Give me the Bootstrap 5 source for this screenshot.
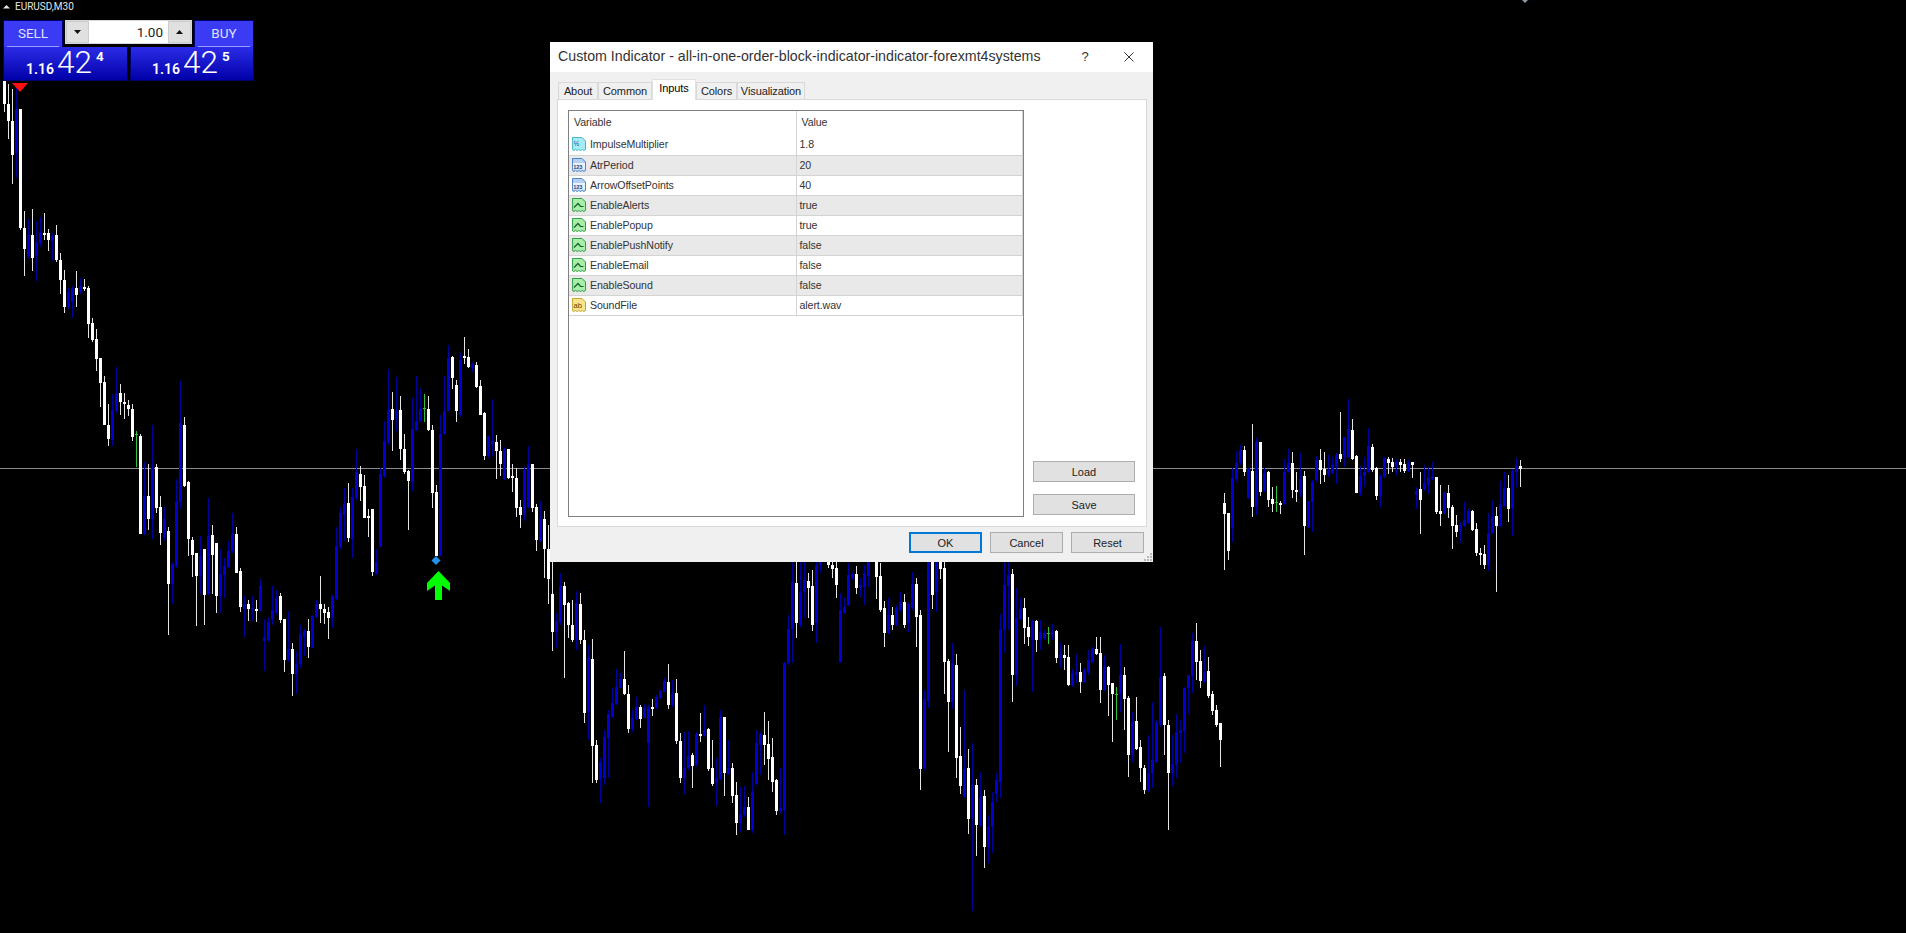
<!DOCTYPE html>
<html lang="en">
<head>
<meta charset="UTF-8">
<meta name="viewport" content="width=device-width, initial-scale=1.0">
<title>EURUSD,M30</title>
<link href="https://cdn.jsdelivr.net/npm/bootstrap@5.3.3/dist/css/bootstrap.min.css" rel="stylesheet">
<style>
    body {
        background: #000;
        margin: 0;
        overflow: hidden;
        font-family: "Liberation Sans", Arial, sans-serif;
    }

    .chart-area {
        width: 1906px;
        height: 933px;
        background: #000;
    }

    .chart-svg {
        left: 0;
        top: 0;
    }

    /* symbol label + one click trading panel */
    .sym-label {
        left: 15px;
        top: 0;
        color: #e6e6e6;
        font: 400 10px/14px Roboto, sans-serif;
    }

    .trade-panel {
        left: 3px;
        top: 20px;
        width: 251px;
        font-family: Roboto, sans-serif;
        color: #fff;
    }

    .side-btn {
        width: 60px;
        height: 27px;
        padding: 2px 3px 0;
        background: #3b3bf6;
        color: #dfe2ff;
        font-size: 13.5px;
        font-weight: 400;
        line-height: 20px;
        text-align: center;
        border: 1px solid #00006e;
        border-bottom: 0;
    }

    .side-btn span {
        display: block;
        height: 24px;
        border-bottom: 1px solid #9a9cff;
    }

    .lot-spin {
        width: 127px;
        height: 24px;
        background: #fff;
        color: #222;
        font-size: 13.5px;
        font-weight: 400;
        line-height: 22px;
        border: 1px solid #d8d8d8;
    }

    .lot-arrow {
        width: 23px;
        background: #e0e0e0;
        border: 1px solid #cccccc;
    }

    .lot-val {
        padding-right: 5px;
    }

    .quote-box {
        height: 34px;
        background: linear-gradient(#2c2ce8, #0000a8);
        border: 1px solid #00006e;
        border-top: 0;
        line-height: 1;
    }

    .quote-a { width: 125px; padding-left: 22px; }
    .quote-b { width: 124px; padding-left: 21px; }

    .q-head { font-size: 14px; font-weight: 600; margin-top: 15px; }
    .q-big { font-size: 31.5px; font-weight: 300; margin: 0 0 0 3px; }
    .q-tail { font-size: 13.5px; font-weight: 700; margin: 3px 0 0 4px; }

    /* dialog window */
    .dlg-window {
        left: 550px;
        top: 42px;
        width: 603px;
        height: 520px;
        background: #f0f0f0;
        color: #222;
        font-size: 11px;
        z-index: 5;
    }

    .dlg-title {
        height: 30px;
        background: #fff;
        padding-left: 8px;
        font-size: 14.2px;
        color: #333;
    }

    .dlg-help {
        width: 14px;
        margin-right: 32px;
        font-size: 13px;
        text-align: center;
    }

    .dlg-close {
        margin-right: 19px;
    }

    .tab-strip {
        margin: 7px 0 0 8px;
        height: 20px;
        border: 0;
        position: relative;
        z-index: 1;
        gap: 0;
    }

    .tab-strip .nav-link {
        height: 17px;
        margin: 3px 0 0 0;
        padding: 0;
        color: #222;
        font-size: 11px;
        letter-spacing: -.1px;
        line-height: 16px;
        text-align: center;
        background: #f0f0f0;
        border: 1px solid #d9d9d9;
        border-bottom: 0;
        border-radius: 0;
    }

    .tab-strip .nav-link.active {
        height: 21px;
        margin-top: 0;
        line-height: 17px;
        background: #fff;
    }

    .tab-about { width: 40px; }
    .tab-common { width: 54px; }
    .tab-inputs { width: 44px; }
    .tab-colors { width: 41px; }
    .tab-vis { width: 68px; }

    .tab-body {
        margin-left: 7px;
        width: 590px;
        height: 428px;
        padding: 10px 11px 9px 10px;
        background: #fff;
        border: 1px solid #d9d9d9;
    }

    .grid-wrap {
        width: 456px;
        background: #fff;
        border: 1px solid #808080;
    }

    .inp-table {
        width: 454px;
        margin: 0;
        table-layout: fixed;
        --bs-table-bg: transparent;
        font-size: 10.6px;
        letter-spacing: -.08px;
        color: #333;
    }

    .inp-table th,
    .inp-table td {
        height: 20px;
        padding: 0;
        vertical-align: middle;
        font-weight: 400;
        white-space: nowrap;
        border-bottom: 1px solid #d4d4d4;
        border-right: 1px solid #d4d4d4;
    }

    .inp-table th {
        height: 24px;
        padding-left: 5px;
        border-bottom: 0;
    }

    .inp-table .col-name { width: 227px; }

    .inp-table tr.odd-row td {
        background: #e9e9e9;
    }

    .inp-table td.val-cell {
        padding: 1px 0 0 3px;
    }

    .row-ic {
        margin: 0 3px 0 2px;
        vertical-align: -4px;
    }

    .side-col {
        width: 103px;
        margin-left: 9px;
        gap: 12px;
        padding-bottom: 2px;
    }

    .mt-btn {
        height: 21px;
        padding: 0;
        font-size: 11px;
        line-height: 18px;
        color: #222;
        background: #e1e1e1;
        border: 1px solid #adadad;
        border-radius: 0;
    }

    .dlg-foot {
        padding: 5px 9px 0 0;
        gap: 8px;
    }

    .dlg-foot .mt-btn {
        width: 73px;
    }

    .dlg-foot .mt-default {
        border: 2px solid #0078d7;
    }

    .dlg-grip {
        right: 1px;
        bottom: 1px;
    }

    .top-mark {
        left: 1522px;
        top: 0;
    }
</style>
</head>
<body>

<svg width="0" height="0" class="position-absolute">
    <defs>
        <path id="doc-shape" d="M1.500 1.500h9.500l3.500 3.500v8.500l-1.700 1-1.600-1-1.700 1-1.700-1-1.600 1-1.700-1-1.700 1-1.100-.600z"/>
        <symbol id="ic-real" viewBox="0 0 16 16">
            <use href="#doc-shape" fill="#a6ecf2" stroke="#45b7cb"/>
            <text x="2.500" y="10" font-family="Liberation Sans" font-size="7" font-weight="700" fill="#2a6fb0">½</text>
        </symbol>
        <symbol id="ic-int" viewBox="0 0 16 16">
            <use href="#doc-shape" fill="#b5d0f2" stroke="#4a86c8"/>
            <rect x="2" y="6" width="12" height="6.500" fill="#eaf2fc"/>
            <text x="2.200" y="11.600" font-family="Liberation Sans" font-size="5.600" font-weight="700" fill="#123f8a">123</text>
        </symbol>
        <symbol id="ic-bool" viewBox="0 0 16 16">
            <use href="#doc-shape" fill="#a8eda8" stroke="#2f9e44"/>
            <path d="M3 10.500 7 6.500l2.500 3h3" fill="none" stroke="#14602a" stroke-width="1.200"/>
        </symbol>
        <symbol id="ic-str" viewBox="0 0 16 16">
            <use href="#doc-shape" fill="#f7e58e" stroke="#c7a32a"/>
            <text x="2.600" y="11" font-family="Liberation Sans" font-size="7.600" fill="#5a4300">ab</text>
        </symbol>
    </defs>
</svg>

<div class="chart-area position-relative overflow-hidden">
    <svg id="chart" class="chart-svg position-absolute" width="1906" height="933" shape-rendering="crispEdges"></svg>

    <svg class="position-absolute top-mark" width="6" height="3"><path d="M0 0h6L3 3z" fill="#8a9aa8"/></svg>

    <div class="sym-label position-absolute">EURUSD,M30</div>

    <div class="trade-panel position-absolute">
        <div class="d-flex gap-0 justify-content-between">
            <div class="side-btn"><span>SELL</span></div>
            <div class="lot-spin d-flex">
                <div class="lot-arrow d-flex align-items-center justify-content-center">
                    <svg width="7" height="4"><path d="M0 0h7L3.500 4z" fill="#111"/></svg>
                </div>
                <div class="lot-val flex-grow-1 text-end">1.00</div>
                <div class="lot-arrow d-flex align-items-center justify-content-center">
                    <svg width="7" height="4"><path d="M0 4h7L3.500 0z" fill="#111"/></svg>
                </div>
            </div>
            <div class="side-btn"><span>BUY</span></div>
        </div>
        <div class="d-flex justify-content-between">
            <div class="quote-box quote-a d-flex align-items-start">
                <span class="q-head">1.16</span><span class="q-big">42</span><span class="q-tail">4</span>
            </div>
            <div class="quote-box quote-b d-flex align-items-start">
                <span class="q-head">1.16</span><span class="q-big">42</span><span class="q-tail">5</span>
            </div>
        </div>
    </div>

    <div class="dlg-window position-absolute d-flex flex-column">
        <div class="dlg-title d-flex align-items-center">
            <div class="flex-grow-1">Custom Indicator - all-in-one-order-block-indicator-indicator-forexmt4systems</div>
            <div class="dlg-help">?</div>
            <svg class="dlg-close" width="10" height="10"><path d="M.5.5l9 9M9.500.5l-9 9" stroke="#333" fill="none"/></svg>
        </div>

        <ul class="nav nav-tabs tab-strip flex-nowrap">
            <li class="nav-item"><a class="nav-link tab-about" href="#">About</a></li>
            <li class="nav-item"><a class="nav-link tab-common" href="#">Common</a></li>
            <li class="nav-item"><a class="nav-link tab-inputs active" href="#">Inputs</a></li>
            <li class="nav-item"><a class="nav-link tab-colors" href="#">Colors</a></li>
            <li class="nav-item"><a class="nav-link tab-vis" href="#">Visualization</a></li>
        </ul>

        <div class="tab-body d-flex">
            <div class="grid-wrap">
                <table class="table inp-table">
                    <thead>
                        <tr><th class="col-name">Variable</th><th>Value</th></tr>
                    </thead>
                    <tbody>
                        <tr><td><svg class="row-ic" width="16" height="16"><use href="#ic-real"/></svg>ImpulseMultiplier</td><td class="val-cell">1.8</td></tr>
                        <tr class="odd-row"><td><svg class="row-ic" width="16" height="16"><use href="#ic-int"/></svg>AtrPeriod</td><td class="val-cell">20</td></tr>
                        <tr><td><svg class="row-ic" width="16" height="16"><use href="#ic-int"/></svg>ArrowOffsetPoints</td><td class="val-cell">40</td></tr>
                        <tr class="odd-row"><td><svg class="row-ic" width="16" height="16"><use href="#ic-bool"/></svg>EnableAlerts</td><td class="val-cell">true</td></tr>
                        <tr><td><svg class="row-ic" width="16" height="16"><use href="#ic-bool"/></svg>EnablePopup</td><td class="val-cell">true</td></tr>
                        <tr class="odd-row"><td><svg class="row-ic" width="16" height="16"><use href="#ic-bool"/></svg>EnablePushNotify</td><td class="val-cell">false</td></tr>
                        <tr><td><svg class="row-ic" width="16" height="16"><use href="#ic-bool"/></svg>EnableEmail</td><td class="val-cell">false</td></tr>
                        <tr class="odd-row"><td><svg class="row-ic" width="16" height="16"><use href="#ic-bool"/></svg>EnableSound</td><td class="val-cell">false</td></tr>
                        <tr><td><svg class="row-ic" width="16" height="16"><use href="#ic-str"/></svg>SoundFile</td><td class="val-cell">alert.wav</td></tr>
                    </tbody>
                </table>
            </div>
            <div class="side-col d-flex flex-column justify-content-end">
                <button type="button" class="btn mt-btn">Load</button>
                <button type="button" class="btn mt-btn">Save</button>
            </div>
        </div>

        <div class="dlg-foot d-flex justify-content-end">
            <button type="button" class="btn mt-btn mt-default">OK</button>
            <button type="button" class="btn mt-btn">Cancel</button>
            <button type="button" class="btn mt-btn">Reset</button>
        </div>

        <svg class="dlg-grip position-absolute" width="8" height="8">
            <path d="M6 0h2v2H6zM3 3h2v2H3zM6 3h2v2H6zM0 6h2v2H0zM3 6h2v2H3zM6 6h2v2H6z" fill="#b8b8b8"/>
        </svg>
    </div>
</div>

<script src="https://cdn.jsdelivr.net/npm/bootstrap@5.3.3/dist/js/bootstrap.bundle.min.js"></script>
<script>
// candles read off the chart: colour x high top bottom low (in the scale of each block)
var blocks = [
{sx: 2.8, sy: 2.45, ox: 0, oy: 80, rows: `
w 11 0 0 60 78;w 23 10 60 100 145;w 35 22 100 183 255;b 46 20 70 180 240;w 57 70 72 362 368;w 68 322 362 415 480
b 80 340 380 432 435;w 91 317 380 435 468;b 102 345 398 432 492;b 113 335 372 400 408;w 125 327 376 378 392;w 136 365 376 393 420
b 147 375 382 394 443;w 158 355 380 442 445;w 169 425 440 490 525;w 180 465 490 557 572;b 191 510 520 557 562;b 203 505 510 543 583
w 214 468 510 527 555;b 225 485 505 520 525;w 236 487 507 510 518;w 247 505 510 597 632;w 258 582 596 636 642;w 270 610 635 683 714
w 281 680 682 742 800;w 292 725 740 845 845;w 303 795 845 880 897;b 315 770 808 882 897;b 326 703 770 810 815;w 337 745 768 790 820
w 348 768 790 795 830;w 359 785 797 805 822;w 370 795 805 875 885;g 382 860 868 870 948;w 393 868 872 1112 1112;b 404 935 1020 1112 1115
w 416 940 1018 1075 1103;b 427 845 950 1075 1125;w 438 942 948 1048 1060;w 449 1018 1045 1110 1140;b 460 1045 1075 1120 1130;w 471 1095 1105 1235 1360
b 483 1180 1187 1235 1285;b 494 978 1032 1190 1195;b 505 738 840 1035 1050;w 516 826 845 995 998;w 527 983 985 1125 1165;w 539 1120 1127 1163 1218
w 550 1160 1160 1215 1338;b 561 1118 1167 1215 1260;w 572 1150 1150 1262 1335;b 583 1025 1118 1260 1262;w 595 1090 1115 1163 1260;w 606 1135 1135 1265 1307
b 617 1150 1210 1265 1305;b 628 1170 1190 1212 1270;b 640 1130 1155 1192 1195;b 651 1062 1112 1155 1160;w 662 1095 1113 1207 1207;w 673 1195 1203 1290 1303
b 685 1265 1285 1295 1365;w 696 1275 1285 1295 1325;b 707 1265 1293 1296 1325;w 718 1275 1295 1300 1328;b 729 1222 1240 1300 1302;b 741 1320 1365 1375 1447
b 752 1315 1328 1372 1378;b 763 1240 1298 1320 1335;b 774 1250 1270 1305 1310;w 785 1258 1263 1322 1330;w 796 1320 1320 1420 1450;b 808 1300 1395 1420 1425
w 819 1380 1395 1455 1508;b 830 1400 1430 1455 1505;b 841 1335 1358 1430 1440;b 852 1345 1350 1365 1412;w 863 1320 1350 1390 1415;b 874 1310 1312 1392 1392
b 885 1275 1285 1315 1318;w 897 1215 1285 1295 1330;w 908 1285 1295 1305 1332;w 919 1290 1303 1318 1370;b 931 1262 1265 1315 1342;b 942 1095 1142 1272 1275
b 953 1045 1060 1145 1152;b 965 1000 1040 1065 1130;w 976 988 1037 1122 1132;b 987 1000 1022 1125 1170;b 998 905 960 1025 1030;w 1009 945 965 998 1032
w 1020 968 995 1072 1072;w 1031 1050 1068 1072 1120;w 1043 1050 1052 1205 1215;b 1054 1150 1182 1210 1212;b 1065 950 965 1143 1145;b 1076 835 885 970 975
b 1087 708 808 890 895;w 1098 765 805 832 908;b 1110 728 812 830 860;w 1121 775 808 905 932;w 1132 868 903 960 965;w 1143 955 958 982 1102
b 1155 780 855 985 1008;b 1166 725 835 858 860;b 1177 755 805 835 838;g 1188 770 803 805 838;w 1199 773 805 858 860;w 1211 845 858 1012 1048
w 1222 993 1010 1165 1165;b 1233 820 868 1165 1165;b 1244 725 810 868 870;b 1255 650 680 810 812;w 1266 675 678 730 758;w 1278 735 748 812 838
b 1289 670 685 820 825;w 1300 630 675 682 695;w 1312 660 678 703 705;b 1323 690 697 706 715;w 1334 692 698 752 755;w 1345 735 750 820 820
w 1356 813 815 920 930;b 1368 872 872 920 925;b 1379 782 885 892 922;w 1390 870 888 910 977;w 1401 882 910 940 970;b 1412 900 905 978 980
w 1423 905 905 975 978;w 1434 940 970 975 1010;w 1445 950 975 1048 1070;w 1457 1030 1045 1065 1097;b 1468 945 955 1065 1080;b 1479 897 942 1045 1048
w 1490 940 942 1048 1058;w 1502 1040 1045 1128 1155;b 1513 1032 1075 1130 1132;w 1524 1055 1075 1150 1220;w 1535 1090 1148 1222 1283
`},
{sx: 3, sy: 3, ox: 540, oy: 555, rows: `
w 37 20 118 230 288;b 49 175 198 230 280;b 61 55 92 200 210;w 73 82 93 150 368;w 85 140 143 210 248;w 97 135 210 255 260
b 109 108 143 255 285;w 121 113 147 255 268;w 133 225 255 473 503;b 145 270 308 470 555;w 157 252 312 572 685;w 169 555 570 675 685
b 181 610 622 672 743;b 193 525 545 670 690;b 205 465 478 548 670;b 217 398 445 485 490;b 229 343 395 447 450;b 241 355 372 400 400
w 253 288 372 418 420;w 265 390 418 522 533;b 277 465 490 522 530;b 289 427 455 492 495;w 301 450 455 492 520;b 313 448 460 488 490
b 325 450 455 563 755;w 337 433 457 463 483;b 349 420 425 460 462;b 361 405 408 430 432;b 373 370 378 410 412;w 385 327 382 450 462
b 397 375 418 450 455;w 409 373 414 557 568;w 421 535 558 668 683;b 433 530 640 668 717;b 445 528 603 640 645;w 457 595 600 633 698
b 469 530 537 630 635;w 481 473 537 542 560;b 493 450 525 542 545;w 505 520 522 642 648;w 517 555 640 688 692;b 529 610 670 685 752
b 541 465 487 672 675;w 553 485 487 653 722;b 565 555 640 657 660;w 577 625 638 722 745;w 589 682 720 805 840;b 601 695 778 805 830
b 613 692 755 780 785;w 625 725 755 825 825;b 637 652 712 825 835;b 649 525 565 688 690;b 661 530 538 570 660;w 673 472 540 570 630
w 685 498 568 612 675;w 697 550 607 680 710;w 709 672 675 768 780;b 721 640 760 768 775;b 733 320 325 765 840;b 745 180 222 325 330
b 757 20 82 222 325;w 769 20 85 205 248;b 781 20 112 210 215;b 793 20 75 112 190;w 805 55 78 100 190;w 817 45 93 210 228;b 829 20 30 205 265
b 841 10 10 30 55;w 865 10 10 30 38;w 877 10 30 43 68
`},
{sx: 3, sy: 3, ox: 780, oy: 555, rows: `
w 169 20 40 90 128;b 181 115 165 322 325;b 193 125 155 175 178;b 205 25 60 150 152;b 217 50 58 68 75;w 229 33 57 100 118;b 241 70 90 100 125
b 253 30 58 95 150;b 265 10 10 62 95;w 289 10 10 65 132;w 301 25 62 165 172;w 313 138 158 235 275;b 325 130 180 235 238;w 337 155 180 210 225
b 349 150 160 210 212;b 361 112 140 165 170;w 373 118 142 210 218;b 385 145 148 205 230;b 397 50 88 160 165;w 409 70 87 185 275;w 421 165 180 642 705
b 433 405 432 640 645;b 445 10 10 438 458;w 457 10 10 120 162;b 469 10 10 112 172;w 481 10 10 42 72;w 493 10 38 320 418;w 505 312 318 440 590
b 517 265 325 440 462;w 529 297 330 608 670;w 541 517 603 693 718;b 553 405 642 725 728;w 565 582 640 792 837;b 577 565 690 790 1067;w 589 672 690 810 903
b 601 652 725 810 815;w 613 705 722 877 940;b 625 780 815 877 925;b 637 712 742 815 895;b 649 655 675 717 740;b 661 178 222 680 730;b 673 10 90 225 295
b 685 10 60 92 225;w 697 42 57 360 442;b 709 100 190 360 392;b 721 130 162 192 195;w 733 130 158 218 268;w 745 185 215 245 272;b 757 195 197 255 410
w 769 195 197 255 290;b 781 195 232 255 285;b 793 225 235 248 255;g 805 215 235 236 267;b 817 208 228 240 255;w 829 225 228 308 325;b 841 262 297 310 340
w 853 270 300 308 345;w 865 270 307 390 392;b 877 342 353 390 395;b 889 298 350 360 385
`},
{sx: 3, sy: 3, ox: 1040, oy: 600, rows: `
w 121 190 215 245 278;b 133 205 210 245 250;b 145 150 180 215 225;b 157 140 145 185 188;w 169 112 147 163 165;w 181 112 160 270 308;b 193 165 200 270 272
w 205 198 200 255 348;w 217 250 250 282 425;g 229 262 283 285 360;b 241 132 225 282 335;w 253 202 225 297 390;w 265 288 295 465 530;b 277 335 365 465 485
w 289 292 363 447 450;w 301 420 440 505 547;w 313 495 503 570 582;b 325 405 520 570 575;b 337 307 480 520 565;b 349 360 365 485 490;b 361 80 232 375 380
w 373 220 228 375 465;w 385 360 375 518 690;b 397 405 492 518 558;b 409 342 397 495 535;b 421 360 390 400 490;b 433 262 265 392 460;b 445 225 225 265 342
b 457 100 122 228 280;w 469 68 122 185 240;w 481 150 183 243 265;b 493 138 215 245 248;w 505 172 213 288 295;w 517 272 282 333 345;w 529 315 330 375 380
w 541 368 370 420 500
`},
{sx: 3, sy: 3, ox: 1150, oy: 380, rows: `
w 223 340 370 402 570;w 235 400 400 513 540;b 247 265 295 445 485;b 259 213 250 298 305;b 271 195 210 250 255;w 283 198 210 276 288;b 295 265 265 355 358
w 307 132 273 380 410;b 319 175 185 380 405;w 331 186 186 337 348;b 343 265 280 333 337;w 355 273 276 360 380;w 367 322 358 372 395;g 379 318 367 369 395
w 391 362 369 375 402;b 403 238 275 372 375;b 415 208 250 275 278;w 427 216 250 330 355;w 439 275 330 336 365;b 451 220 297 340 350;w 463 273 288 438 525
b 475 363 363 440 443;b 487 300 305 365 455;b 499 228 240 300 305;w 511 208 240 270 312;w 523 215 267 285 305;b 535 225 270 282 292;b 547 230 255 278 282
b 559 220 225 260 312;w 571 97 223 238 245;b 583 170 170 230 260;b 595 57 148 232 235;w 607 117 150 237 240;w 619 225 228 340 340;b 631 258 288 340 348
b 643 232 275 288 320;b 655 145 197 275 278;w 667 192 200 270 275;w 679 260 265 348 360;b 691 283 287 348 382;b 703 230 235 292 295;w 715 232 237 248 282
w 727 235 247 262 275;b 739 238 245 262 285;w 751 237 247 254 275;w 763 238 252 272 280;b 775 240 248 272 275;w 787 245 247 255 293;b 799 320 332 345 388
w 811 277 327 360 462;b 823 255 310 328 333;b 835 262 295 315 343;b 847 245 292 298 300;w 859 292 292 397 402;w 871 315 393 402 438;b 883 337 340 400 402
w 895 315 340 385 415;w 907 375 380 437 507;w 919 405 435 456 470;b 931 425 435 454 490;b 943 367 420 437 440;b 955 388 392 430 432;w 967 390 393 450 453
w 979 430 447 520 528;w 991 505 520 525 555;w 1003 495 523 555 568;b 1015 400 460 555 572;b 1027 360 410 460 462;w 1039 380 408 438 635;b 1051 302 372 438 442
b 1063 275 325 378 380;w 1075 285 325 387 425;b 1087 268 272 385 468;b 1099 235 258 275 320;w 1111 240 258 267 320
`}
];

var bodyCol = {w: '#ffffff', b: '#0000d2', g: '#2fc23a'};
var wickCol = {w: '#e4e4e4', b: '#00009a', g: '#2fc23a'};
var out = [];

// crosshair level goes under the candles
out.push('<rect x="0" y="468" width="1906" height="1" fill="#8c8c8c"/>');

blocks.forEach(function (bl) {
    bl.rows.trim().split(/[;\n]/).forEach(function (r) {
        var p = r.trim().split(' ');
        var c = p[0];
        var x = Math.round((bl.ox + p[1] / bl.sx) / 4) * 4;
        var h = Math.round(bl.oy + p[2] / bl.sy);
        var t = Math.round(bl.oy + p[3] / bl.sy);
        var b = Math.round(bl.oy + p[4] / bl.sy);
        var l = Math.round(bl.oy + p[5] / bl.sy);
        out.push('<rect x="' + x + '" y="' + h + '" width="1" height="' + Math.max(l - h, 1) + '" fill="' + wickCol[c] + '"/>');
        if (c === 'g') {
            out.push('<rect x="' + (x - 1) + '" y="' + t + '" width="3" height="1" fill="' + bodyCol[c] + '"/>');
        } else {
            out.push('<rect x="' + (x - 1) + '" y="' + t + '" width="3" height="' + Math.max(b - t, 2) + '" fill="' + bodyCol[c] + '"/>');
        }
    });
});

// markers on the chart
out.push('<path d="M12 83h16l-8 9z" fill="#ff1010" shape-rendering="auto"/>');
out.push('<path d="M436 556l4.500 4.500-4.500 4.500-4.500-4.500z" fill="#2292ee" shape-rendering="auto"/>');
out.push('<path d="M438.500 571L450 583v8l-8-5.500V600h-7V585.500l-8 5.500v-8z" fill="#00ff00" shape-rendering="auto"/>');
// small triangle left of the symbol name
out.push('<path d="M3 8.500l3.500-3.500 3.500 3.500z" fill="#e6e6e6" shape-rendering="auto"/>');

document.getElementById('chart').innerHTML = out.join('');
</script>
</body>
</html>
